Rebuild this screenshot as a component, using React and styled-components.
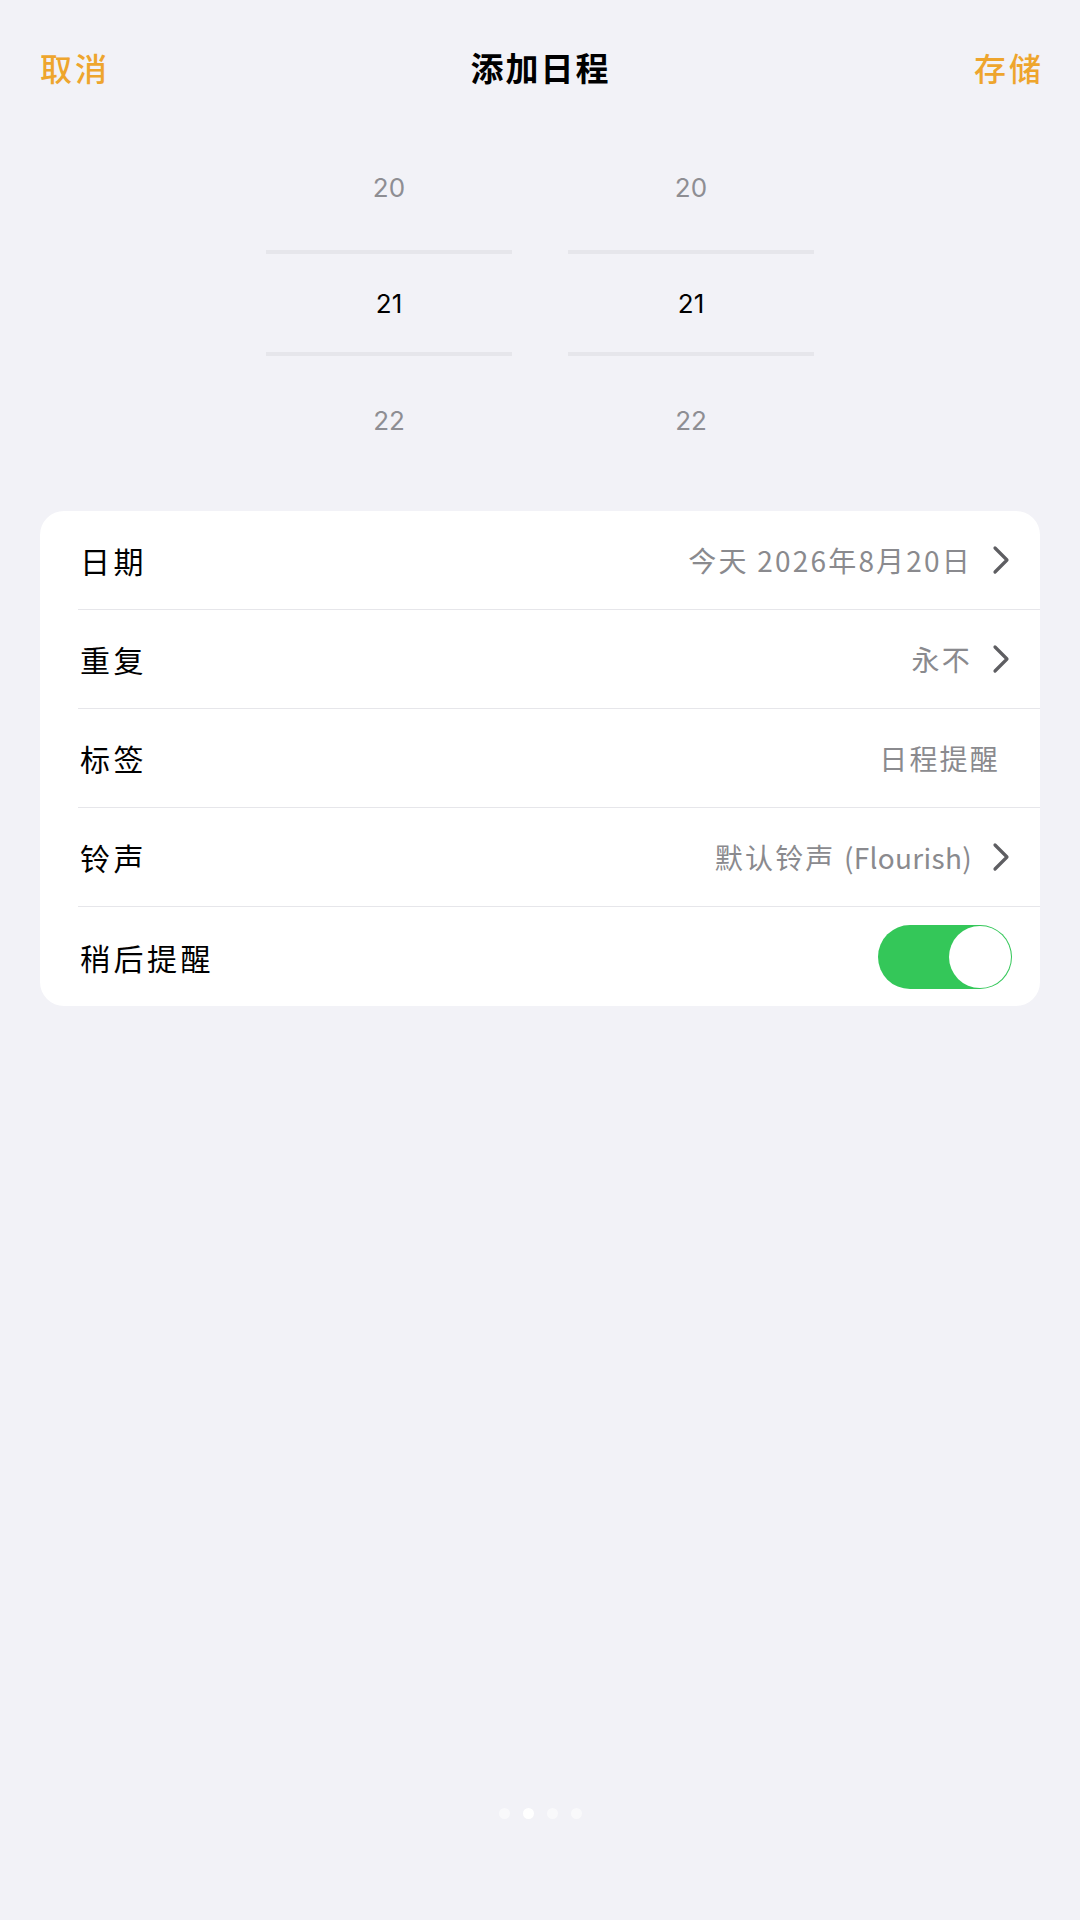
import React from "react";
import styled, { createGlobalStyle } from "styled-components";

const GlobalStyle = createGlobalStyle`
  html, body {
    margin: 0;
    padding: 0;
    background: #f2f2f7;
  }
  body {
    font-family: "Noto Sans CJK SC", "Noto Sans", sans-serif;
    -webkit-font-smoothing: antialiased;
  }
  * { box-sizing: border-box; }
`;

const Page = styled.div`
  width: 1080px;
  min-height: 1920px;
  background: #f2f2f7;
  display: flex;
  flex-direction: column;
`;

const Header = styled.header`
  height: 134px;
  padding: 0 39px 0 40px;
  display: grid;
  grid-template-columns: 1fr auto 1fr;
  align-items: center;
`;

const NavButton = styled.button`
  background: none;
  border: none;
  padding: 0;
  font-family: "Noto Sans CJK SC", sans-serif;
  font-size: 32px;
  font-weight: 500;
  color: #eea52d;
  justify-self: ${(p) => (p.$end ? "end" : "start")};
  letter-spacing: 3px;
  margin-right: ${(p) => (p.$end ? "-3px" : "0")};
`;

const Title = styled.h1`
  margin: 0;
  font-family: "Noto Sans CJK SC", sans-serif;
  font-size: 33px;
  font-weight: 700;
  color: #000;
  letter-spacing: 2px;
`;

const Picker = styled.div`
  display: flex;
  justify-content: center;
  gap: 56px;
  margin-top: -6px;
`;

const Column = styled.div`
  width: 246px;
  display: flex;
  flex-direction: column;
`;

const Item = styled.div`
  display: flex;
  align-items: center;
  justify-content: center;
  font-family: "Inter", "Noto Sans", sans-serif;
  font-size: 26px;
  color: ${(p) => (p.$active ? "#000" : "#8e8e93")};
  height: ${(p) => p.$h}px;
  padding-top: ${(p) => p.$pt || 0}px;
  padding-bottom: ${(p) => p.$pb || 0}px;
  ${(p) =>
    p.$active &&
    `
    border-top: 4px solid #e6e6eb;
    border-bottom: 4px solid #e6e6eb;
  `}
`;

const Card = styled.section`
  margin: 33px 40px 0 40px;
  background: #fff;
  border-radius: 24px;
  overflow: hidden;
`;

const Row = styled.div`
  height: 99px;
  padding-left: 38px;
  display: flex;
`;

const RowInner = styled.div`
  flex: 1;
  display: flex;
  align-items: center;
  padding-left: 2px;
  padding-right: ${(p) => p.$pr}px;
  border-bottom: ${(p) => (p.$last ? "none" : "1px solid #e6e6ea")};
`;

const Label = styled.span`
  font-size: 30px;
  color: #000;
  letter-spacing: 3.5px;
  flex: 1;
`;

const Value = styled.span`
  font-size: 28px;
  color: #8a8a8e;
  letter-spacing: 2.2px;
`;

const Latin = styled.span`
  letter-spacing: 0.3px;
`;

const Chevron = styled.svg`
  width: 20px;
  height: 30px;
  margin-left: 19px;
  flex-shrink: 0;
`;

const Toggle = styled.div`
  width: 134px;
  height: 64px;
  border-radius: 32px;
  background: #34c759;
  display: flex;
  align-items: center;
  justify-content: flex-end;
  padding: 1px;
`;

const Knob = styled.div`
  width: 62px;
  height: 62px;
  border-radius: 50%;
  background: #fff;
`;

const Dots = styled.div`
  margin-top: auto;
  padding-bottom: 101px;
  display: flex;
  justify-content: center;
  gap: 13px;
`;

const Dot = styled.span`
  width: 11px;
  height: 11px;
  border-radius: 50%;
  background: ${(p) => (p.$active ? "#ffffff" : "rgba(255,255,255,0.55)")};
`;

const ChevronIcon = () => (
  <Chevron viewBox="0 0 20 30">
    <path
      d="M4 3 L16 15 L4 27"
      fill="none"
      stroke="#5e5e62"
      strokeWidth="3.2"
      strokeLinecap="round"
      strokeLinejoin="round"
    />
  </Chevron>
);

const PickerColumn = () => (
  <Column>
    <Item $h={122} $pb={4}>20</Item>
    <Item $h={106} $active>21</Item>
    <Item $h={122} $pt={6}>22</Item>
  </Column>
);

export default function App() {
  return (
    <>
      <GlobalStyle />
      <Page>
        <Header>
          <NavButton>取消</NavButton>
          <Title>添加日程</Title>
          <NavButton $end>存储</NavButton>
        </Header>

        <Picker>
          <PickerColumn />
          <PickerColumn />
        </Picker>

        <Card>
          <Row>
            <RowInner $pr={29}>
              <Label>日期</Label>
              <Value>今天 2026年8月20日</Value>
              <ChevronIcon />
            </RowInner>
          </Row>
          <Row>
            <RowInner $pr={29}>
              <Label>重复</Label>
              <Value>永不</Value>
              <ChevronIcon />
            </RowInner>
          </Row>
          <Row>
            <RowInner $pr={40}>
              <Label>标签</Label>
              <Value>日程提醒</Value>
            </RowInner>
          </Row>
          <Row>
            <RowInner $pr={29}>
              <Label>铃声</Label>
              <Value>
                默认铃声 <Latin>(Flourish)</Latin>
              </Value>
              <ChevronIcon />
            </RowInner>
          </Row>
          <Row>
            <RowInner $pr={28} $last>
              <Label>稍后提醒</Label>
              <Toggle>
                <Knob />
              </Toggle>
            </RowInner>
          </Row>
        </Card>

        <Dots>
          <Dot />
          <Dot $active />
          <Dot />
          <Dot />
        </Dots>
      </Page>
    </>
  );
}
